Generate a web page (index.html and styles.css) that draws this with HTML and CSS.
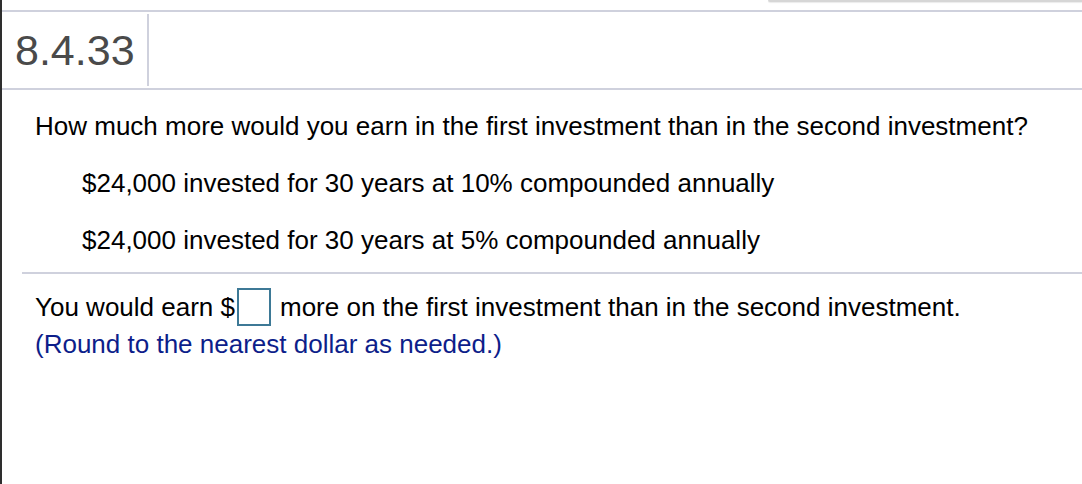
FILE: index.html
```html
<!DOCTYPE html>
<html>
<head>
<meta charset="utf-8">
<link rel="stylesheet" href="styles.css">
</head>
<body>
<div class="page">
  <div class="topstrip"><div class="shadowbar"></div></div>
  <div class="header">
    <div class="title">8.4.33</div>
  </div>
  <div class="content">
    <p class="question">How much more would you earn in the first investment than in the second investment?</p>
    <p class="item">$24,000 invested for 30 years at 10% compounded annually</p>
    <p class="item">$24,000 invested for 30 years at 5% compounded annually</p>
  </div>
  <div class="answer">
    <p class="line">You would earn $<span class="box"></span>more on the first investment than in the second investment.</p>
    <p class="hint">(Round to the nearest dollar as needed.)</p>
  </div>
</div>
</body>
</html>
```

FILE: styles.css
```css
html, body {
  margin: 0;
  padding: 0;
  background: #fff;
}
body {
  font-family: "Liberation Sans", Arial, sans-serif;
  color: #000;
}
.page {
  height: 484px;
  border-left: 2px solid #2e2e2e;
  box-sizing: border-box;
}
.topstrip {
  height: 10px;
  display: flex;
  justify-content: flex-end;
}
.shadowbar {
  width: 314px;
  height: 2px;
  background: #d6d6d6;
  border-bottom-left-radius: 3px;
  box-shadow: 0 1px 1px rgba(0,0,0,0.08);
}
.header {
  border-top: 2px solid #cfd1dd;
  border-bottom: 2px solid #cfd1dd;
  padding: 2px 0;
  height: 72px;
  display: flex;
}
.title {
  border-right: 2px solid #cfd1dd;
  padding: 0 12px 0 13px;
  font-size: 43px;
  line-height: 72px;
  color: #4a4a4a;
}
.content {
  padding: 0 0 0 33px;
}
.question {
  margin: 0;
  padding-top: 21px;
  font-size: 26px;
  line-height: 30px;
}
.item {
  margin: 27px 0 0 47px;
  font-size: 26px;
  line-height: 30px;
}
.answer {
  margin: 17px 0 0 20px;
  border-top: 2px solid #cfd1dd;
  padding: 13px 0 0 13px;
}
.line {
  margin: 0;
  font-size: 26px;
  line-height: 40px;
  display: flex;
  align-items: center;
}
.box {
  display: inline-block;
  width: 30px;
  height: 34px;
  border: 2px solid #3d7996;
  margin: 0 9px 0 2px;
}
.hint {
  margin: 2px 0 0;
  font-size: 26px;
  line-height: 30px;
  color: #0d1e8a;
}
```
